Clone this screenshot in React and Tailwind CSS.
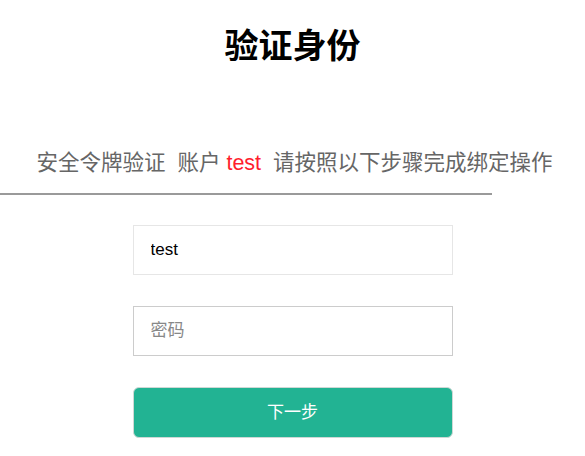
export default function App() {
  return (
    <div className="w-[585px] h-[456px] bg-white overflow-hidden" style={{ fontFamily: '"Liberation Sans", "Noto Sans CJK SC", sans-serif' }}>
      <h1 className="pt-[26px] text-center text-[34px] leading-[40px] font-bold text-black">验证身份</h1>
      <p className="mt-[83px] pl-[4px] text-center text-[21.5px] leading-[28px] text-[#666] whitespace-nowrap">
        安全令牌验证&nbsp;&nbsp;账户&nbsp;<span className="text-[#ff1e2e]">test</span>&nbsp;&nbsp;请按照以下步骤完成绑定操作
      </p>
      <div className="mt-[16px] w-[492px] h-[2px] bg-[#9a9a9a]" />
      <div className="mt-[30px] flex flex-col items-center gap-[31px]">
        <input
          defaultValue="test"
          className="w-[320px] h-[50px] border border-[#e6e6e6] px-[17px] text-[17px] text-black outline-none"
        />
        <input
          placeholder="密码"
          className="w-[320px] h-[50px] border border-[#cccccc] px-[17px] text-[17px] text-black placeholder:text-[#888] outline-none"
        />
        <button className="w-[320px] h-[51px] rounded-[6px] bg-[#22b393] border border-[#cfd8d5] text-white text-[17px]">
          下一步
        </button>
      </div>
    </div>
  );
}
